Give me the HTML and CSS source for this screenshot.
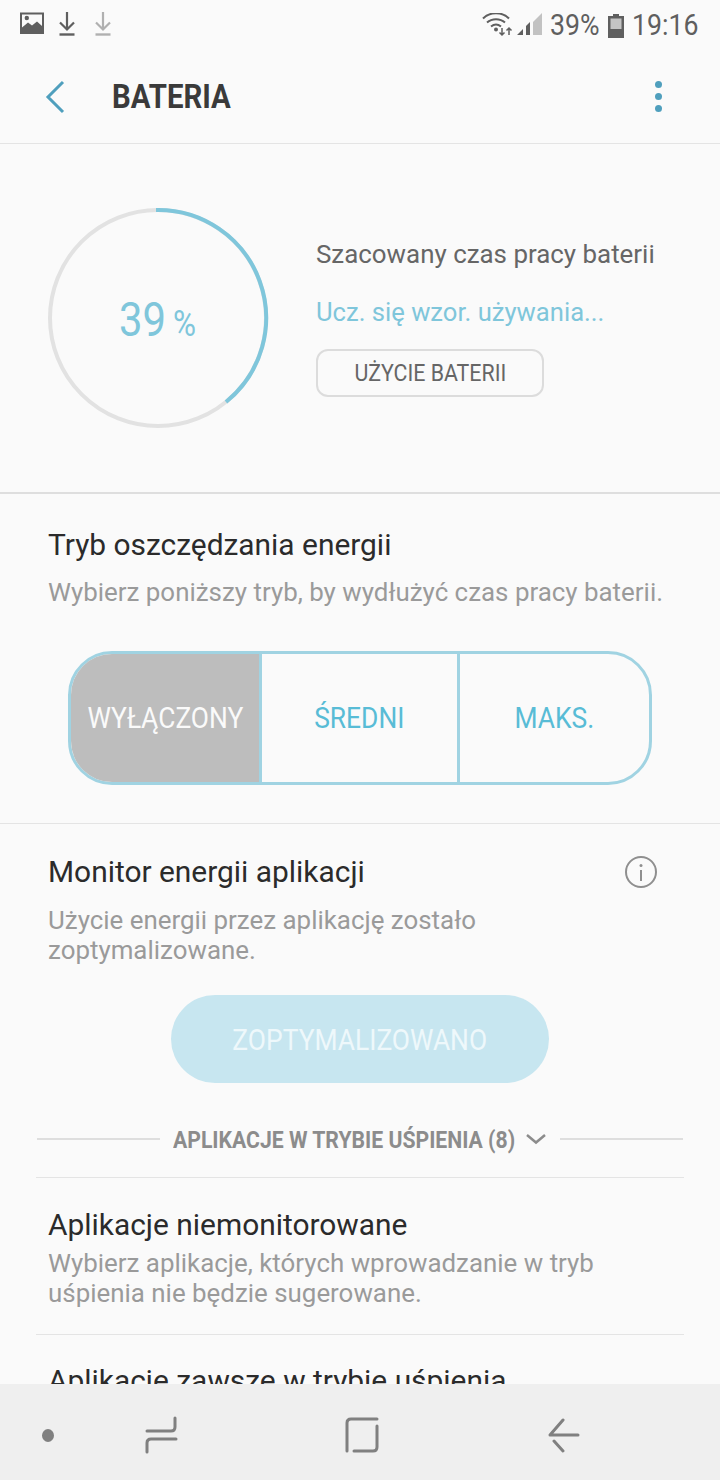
FILE: index.html
```html
<!DOCTYPE html>
<html lang="pl">
<head>
<meta charset="utf-8">
<title>Bateria</title>
<link rel="stylesheet" href="styles.css">
</head>
<body>
<div class="screen">
  <div class="status">
    <div class="status-left">
      <svg class="ic-pic" width="26" height="24" viewBox="0 0 26 24"><path fill="#5f5f5f" fill-rule="evenodd" d="M1 1.500h24v21.500H1z M3 3.500v13l6-5 4 3 5-4 5 4.500V3.500z"/><circle cx="7.800" cy="7" r="2.200" fill="#5f5f5f"/></svg>
      <svg width="20" height="26" viewBox="0 0 20 26"><path fill="none" stroke="#5f5f5f" stroke-width="2.200" d="M10 1v17M3 11.500l7 7 7-7"/><path stroke="#5f5f5f" stroke-width="2.400" d="M2.500 23.500h15"/></svg>
      <svg class="ic-dl2" width="20" height="26" viewBox="0 0 20 26"><path fill="none" stroke="#b0b0b0" stroke-width="2.200" d="M10 1v17M3 11.500l7 7 7-7"/><path stroke="#b0b0b0" stroke-width="2.400" d="M2.500 23.500h15"/></svg>
    </div>
    <div class="status-right">
      <svg width="62" height="26" viewBox="0 0 62 26" class="ic-net">
        <path fill="none" stroke="#5f5f5f" stroke-width="2" d="M2 5.500c7-7 19-7 26 0M6 9.500c5-4.500 13-4.500 18 0M10 13.500c3-2.500 7-2.500 10 0"/>
        <circle cx="15" cy="16.500" r="2" fill="#5f5f5f"/>
        <path fill="none" stroke="#5f5f5f" stroke-width="1.500" d="M21 15v7M18.500 19.500l2.500 2.500 2.500-2.500M28 22v-7M25.500 17.500l2.500-2.500 2.500 2.500"/>
        <path fill="#5f5f5f" d="M36 22l6-6v6zM45 22v-9l4-4v13z"/>
        <path fill="#c2c2c2" d="M52 22V9l9-9v22z"/>
      </svg>
      <span class="st-text">39%</span>
      <svg width="16" height="24" viewBox="0 0 16 24" class="ic-bat"><path fill="#5f5f5f" d="M5 0h6v2h5v22H0V2h5z"/><path fill="#c4c4c4" d="M2.500 4.500h11V15h-11z"/></svg>
      <span class="st-text st-time">19:16</span>
    </div>
  </div>

  <header class="appbar">
    <svg class="ic-back" width="22" height="34" viewBox="0 0 22 34"><path fill="none" stroke="#4f9fbd" stroke-width="3" d="M19 2L4 17l15 15"/></svg>
    <h1 class="title"><span>BATERIA</span></h1>
    <div class="dots"><i></i><i></i><i></i></div>
  </header>

  <section class="summary">
    <svg class="ring" width="224" height="224" viewBox="0 0 224 224">
      <circle cx="112" cy="112" r="108" fill="none" stroke="#e2e2e2" stroke-width="4"/>
      <path fill="none" stroke="#7fc6db" stroke-width="4" d="M110 4A108 108 0 0 1 180 196"/>
      <text x="73" y="130" class="ring-num" textLength="47" lengthAdjust="spacingAndGlyphs">39</text>
      <text x="127" y="130" class="ring-pct" textLength="23" lengthAdjust="spacingAndGlyphs">%</text>
    </svg>
    <div class="summary-info">
      <div class="est">Szacowany czas pracy baterii</div>
      <div class="learn">Ucz. się wzor. używania...</div>
      <div class="usage"><span>UŻYCIE BATERII</span></div>
    </div>
  </section>

  <section class="mode">
    <h2 class="heading">Tryb oszczędzania energii</h2>
    <p class="sub">Wybierz poniższy tryb, by wydłużyć czas pracy baterii.</p>
    <div class="segments">
      <div class="seg seg-off"><span>WYŁĄCZONY</span></div>
      <div class="seg seg-mid"><span>ŚREDNI</span></div>
      <div class="seg seg-max"><span>MAKS.</span></div>
    </div>
  </section>

  <section class="monitor">
    <div class="monitor-head">
      <h2 class="heading">Monitor energii aplikacji</h2>
      <svg width="34" height="34" viewBox="0 0 34 34" class="ic-info"><circle cx="17" cy="17" r="15" fill="none" stroke="#8f8f8f" stroke-width="2"/><circle cx="17" cy="10.500" r="1.500" fill="#8f8f8f"/><path stroke="#8f8f8f" stroke-width="2" d="M17 15v11"/></svg>
    </div>
    <p class="sub sub-2">Użycie energii przez aplikację zostało zoptymalizowane.</p>
    <div class="opt"><span>ZOPTYMALIZOWANO</span></div>
    <div class="sleep">
      <div class="sleep-line"></div>
      <div class="sleep-label"><span>APLIKACJE W TRYBIE UŚPIENIA (8)</span></div>
      <svg width="22" height="12" viewBox="0 0 22 12"><path fill="none" stroke="#8c8c8c" stroke-width="2.500" d="M2 2l9 7.500L20 2"/></svg>
      <div class="sleep-line"></div>
    </div>
  </section>

  <div class="rows">
    <div class="row">
      <h2 class="heading">Aplikacje niemonitorowane</h2>
      <p class="sub sub-3">Wybierz aplikacje, których wprowadzanie w tryb uśpienia nie będzie sugerowane.</p>
    </div>
    <div class="row row-last">
      <h2 class="heading">Aplikacje zawsze w trybie uśpienia</h2>
    </div>
  </div>

  <nav class="navbar">
    <i class="nav-dot"></i>
    <svg class="nav-recent" width="34" height="38" viewBox="0 0 34 38"><path fill="none" stroke="#808080" stroke-width="3" stroke-linecap="round" d="M3 15h24q4 0 4-4V2M32 23H7q-4 0-4 4v9"/></svg>
    <svg class="nav-home" width="34" height="36" viewBox="0 0 34 36"><path fill="none" stroke="#808080" stroke-width="3" stroke-linecap="round" d="M32 2H6Q2 2 2 6v28M32 9v21q0 4-4 4H9"/></svg>
    <svg class="nav-back" width="34" height="36" viewBox="0 0 34 36"><path fill="none" stroke="#808080" stroke-width="3" stroke-linecap="round" stroke-linejoin="round" d="M31 18H3L16 3M7 24l9 10"/></svg>
  </nav>
</div>
</body>
</html>
```
FILE: styles.css
```css
* { box-sizing: border-box; }
html, body { margin: 0; padding: 0; }
body { background: #fafafa; font-family: Roboto, "Noto Sans", sans-serif; }
h1, h2, p { margin: 0; font-weight: 400; }

.screen { position: relative; width: 720px; height: 1480px; overflow: hidden; background: #fafafa; }

.status { height: 50px; display: flex; justify-content: space-between; align-items: flex-start; padding: 11px 22px 0 19px; }
.status-left { display: flex; gap: 12px; align-items: flex-start; }
.ic-dl2 { margin-left: 4px; }
.status-right { display: flex; align-items: flex-start; margin-top: 1px; }
.ic-net { margin-right: 7px; margin-top: 1px; }
.ic-bat { margin: 2px 8px 0 9px; }
.st-text { font-size: 29px; line-height: 26px; color: #5f5f5f; display: inline-block; transform: scaleX(.92); transform-origin: left center; width: 49px; }
.st-time { width: 66px; }

.appbar { height: 94px; display: flex; align-items: center; border-bottom: 1px solid #e4e4e4; padding: 0 58px 0 44px; }
.title { flex: 1; margin-left: 46px; font-size: 33px; font-weight: 700; color: #3a3a3a; }
.title span { display: inline-block; transform: scaleX(.89); transform-origin: left center; }
.ic-back { flex: none; }
.dots { display: flex; flex-direction: column; gap: 5px; }
.dots i { width: 7px; height: 7px; border-radius: 50%; background: #4f9fbd; }

.summary { height: 350px; display: flex; align-items: flex-start; padding: 62px 0 0 46px; border-bottom: 2px solid #dedede; }
.ring { flex: none; }
.ring-num { font: 400 48px Roboto, sans-serif; fill: #7fc6db; }
.ring-pct { font: 400 36px Roboto, sans-serif; fill: #7fc6db; }
.summary-info { margin-left: 46px; padding-top: 29px; }
.est { font-size: 25.900px; line-height: 38px; color: #666; white-space: nowrap; }
.learn { font-size: 25.600px; line-height: 38px; margin-top: 20px; color: #7fc6db; white-space: nowrap; }
.usage { width: 228px; height: 48px; margin-top: 18px; border: 2px solid #dcdcdc; border-radius: 12px; display: flex; align-items: center; justify-content: center; }
.usage span { font-size: 24px; color: #666; display: inline-block; transform: scaleX(.89); white-space: nowrap; }

.mode { height: 330px; padding: 31px 48px 0; border-bottom: 1px solid #e4e4e4; }
.heading { font-size: 29.900px; line-height: 40px; color: #2b2b2b; white-space: nowrap; }
.sub { font-size: 25.900px; line-height: 30px; color: #9a9a9a; }
.mode .sub { margin-top: 12px; white-space: nowrap; }
.segments { display: flex; width: 584px; height: 134px; margin: 44px 0 0 20px; border: 3px solid #a0d3e2; border-radius: 44px; overflow: hidden; }
.seg { display: flex; align-items: center; justify-content: center; padding-bottom: 2px; }
.seg span { font-size: 30px; color: #58bcd6; display: inline-block; transform: scaleX(.88); white-space: nowrap; }
.seg-off { width: 191px; background: #bdbdbd; border-right: 3px solid #a0d3e2; }
.seg-off span { color: #fafafa; }
.seg-mid { width: 198px; border-right: 3px solid #a0d3e2; }
.seg-max { flex: 1; }

.monitor { padding: 28px 0 0; height: 353px; }
.monitor-head { display: flex; justify-content: space-between; align-items: center; padding: 0 62px 0 48px; }
.sub-2 { width: 560px; margin: 13px 0 0 48px; }
.opt { width: 378px; height: 88px; margin: 30px auto 0; border-radius: 44px; background: #c7e6f0; display: flex; align-items: center; justify-content: center; }
.opt span { font-size: 30px; color: #eef8fb; display: inline-block; transform: scaleX(.88); white-space: nowrap; }
.sleep { display: flex; align-items: center; margin: 43px 37px 0; height: 26px; }
.sleep-line { flex: 1; height: 2px; background: #dedede; }
.sleep-label { width: 352px; margin-left: 13px; font-size: 24.500px; font-weight: 700; color: #8c8c8c; white-space: nowrap; }
.sleep-label span { display: inline-block; transform: scaleX(.865); transform-origin: left center; }
.sleep svg { margin: 0 13px 0 0; }

.rows { margin: 0 36px; }
.row { padding: 27px 12px 0; height: 157px; border-top: 1px solid #e4e4e4; }
.row-last { padding-top: 26px; }
.sub-3 { margin-top: 3px; width: 570px; }

.navbar { position: absolute; left: 0; right: 0; bottom: 0; height: 96px; background: #efefef; }
.nav-dot { position: absolute; left: 42px; top: 45px; width: 12px; height: 13px; border-radius: 50%; background: #808080; }
.nav-recent { position: absolute; left: 144px; top: 32px; }
.nav-home { position: absolute; left: 345px; top: 33px; }
.nav-back { position: absolute; left: 547px; top: 33px; }
```
